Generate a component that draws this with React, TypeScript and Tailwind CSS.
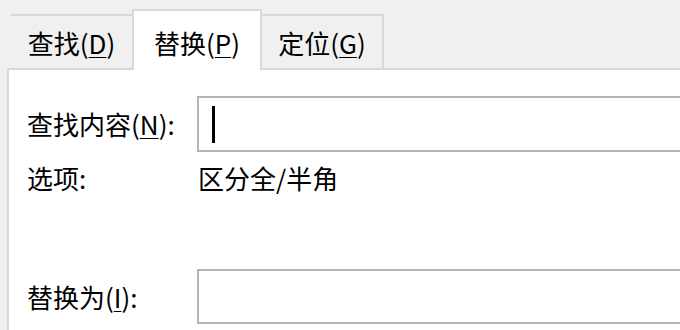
import React from "react";

const FONT = { fontFamily: '"Noto Sans CJK SC", "Noto Sans", sans-serif' };

type TabProps = {
  label: string;
  hotkey: string;
  active?: boolean;
  className?: string;
};

const Tab = ({ label, hotkey, active, className = "" }: TabProps) => (
  <div
    className={`flex justify-center ${
      active
        ? "h-[61px] -mb-[2px] border-2 border-b-0 border-[#d9d9d9] bg-white pt-[17px]"
        : "h-[54px] border-t-2 border-[#d9d9d9] pt-[12px]"
    } ${className}`}
  >
    <span className="text-[26px] leading-[30px] text-black whitespace-nowrap">
      {label}(<span className="underline underline-offset-[3px] decoration-1">{hotkey}</span>)
    </span>
  </div>
);

const Label = ({ text, hotkey }: { text: string; hotkey?: string }) => (
  <span className="w-[170px] shrink-0 text-[26px] leading-[30px] text-black whitespace-nowrap">
    {text}
    {hotkey && (
      <>
        (<span className="underline underline-offset-[3px] decoration-1">{hotkey}</span>)
      </>
    )}
    :
  </span>
);

export default function App() {
  return (
    <div className="w-[680px] h-[330px] overflow-hidden bg-[#f0f0f0] pt-[9px]" style={FONT}>
      {/* tabs */}
      <div className="relative z-10 flex items-end pl-[11px]">
        <Tab label="查找" hotkey="D" className="w-[121px]" />
        <Tab label="替换" hotkey="P" active className="w-[130px]" />
        <Tab label="定位" hotkey="G" className="w-[122px] border-r-2" />
      </div>

      {/* panel */}
      <div className="ml-[7px] w-[760px] h-[300px] border-t-2 border-l-2 border-[#d9d9d9] bg-white pl-[18px] pt-[26px]">
        <div className="flex items-center">
          <Label text="查找内容" hotkey="N" />
          <div className="flex h-[56px] flex-1 items-center border-2 border-[#b4b4b4] bg-white pl-[13px]">
            <span className="h-[37px] w-[3px] bg-black" />
          </div>
        </div>

        <div className="mt-[11px] flex items-center">
          <Label text="选项" />
          <span className="pl-[1px] text-[26px] leading-[30px] text-black whitespace-nowrap">区分全/半角</span>
        </div>

        <div className="mt-[76px] flex items-center">
          <Label text="替换为" hotkey="I" />
          <div className="h-[55px] flex-1 border-2 border-[#b4b4b4] bg-white" />
        </div>
      </div>
    </div>
  );
}
